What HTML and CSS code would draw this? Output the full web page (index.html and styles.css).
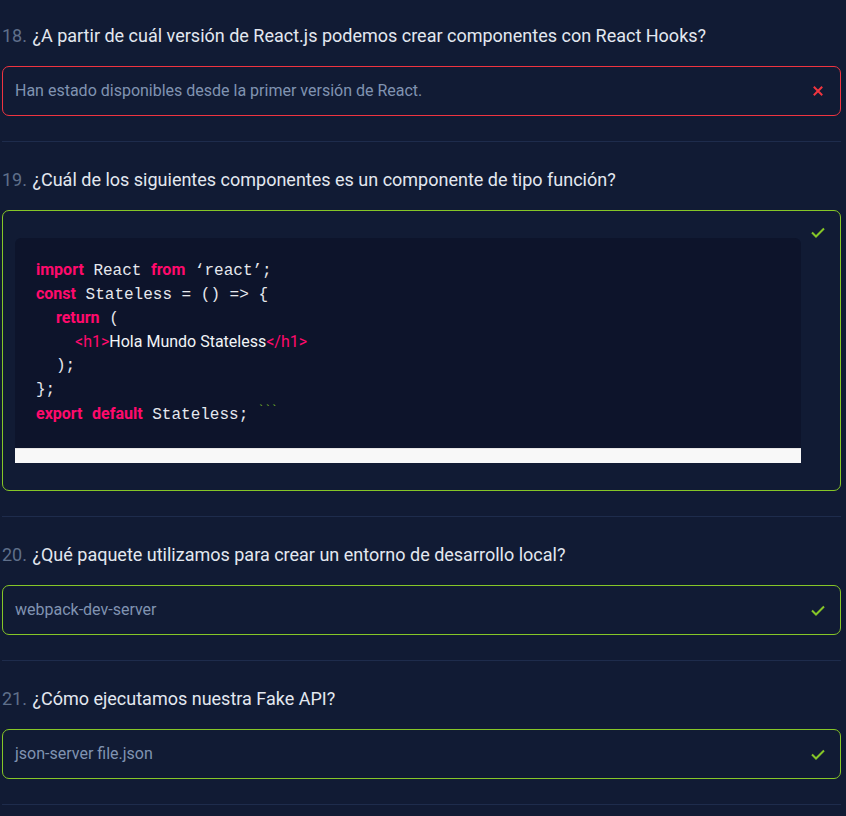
FILE: index.html
```html
<!DOCTYPE html>
<html lang="es">
<head>
<meta charset="utf-8">
<title>Quiz</title>
<link rel="stylesheet" href="styles.css">
</head>
<body>
<div class="quiz">
  <section class="item">
    <h2 class="question"><span class="num">18.</span> ¿A partir de cuál versión de React.js podemos crear componentes con React Hooks?</h2>
    <div class="answer wrong">
      <span class="answer-text">Han estado disponibles desde la primer versión de React.</span>
      <span class="icon">
        <svg width="10" height="10" viewBox="0 0 10 10"><path d="M1.5 1.5 L8.5 8.5 M8.5 1.5 L1.5 8.5" stroke="#f0353f" stroke-width="2" fill="none" stroke-linecap="square"/></svg>
      </span>
    </div>
  </section>

  <section class="item">
    <h2 class="question"><span class="num">19.</span> ¿Cuál de los siguientes componentes es un componente de tipo función?</h2>
    <div class="answer right code-answer">
      <div class="code-wrap">
        <div class="code">
          <div class="line"><span class="kw">import</span> React <span class="kw">from</span> ‘react’;</div>
          <div class="line"><span class="kw">const</span> Stateless = () =&gt; {</div>
          <div class="line ind1"><span class="kw">return</span> (</div>
          <div class="line ind2"><span class="tag">&lt;h1&gt;</span><span class="jsx">Hola Mundo Stateless</span><span class="tag">&lt;/h1&gt;</span></div>
          <div class="line ind1">);</div>
          <div class="line">};</div>
          <div class="line"><span class="kw">export</span> <span class="kw">default</span> Stateless; <span class="ticks">```</span></div>
        </div>
        <div class="scrollbar"></div>
      </div>
      <span class="icon icon-top">
        <svg width="14" height="11" viewBox="0 0 14 11"><path d="M1 5.5 L5 9.5 L13 1.5" stroke="#86c627" stroke-width="2" fill="none"/></svg>
      </span>
    </div>
  </section>

  <section class="item">
    <h2 class="question"><span class="num">20.</span> ¿Qué paquete utilizamos para crear un entorno de desarrollo local?</h2>
    <div class="answer right">
      <span class="answer-text">webpack-dev-server</span>
      <span class="icon">
        <svg width="14" height="11" viewBox="0 0 14 11"><path d="M1 5.5 L5 9.5 L13 1.5" stroke="#86c627" stroke-width="2" fill="none"/></svg>
      </span>
    </div>
  </section>

  <section class="item">
    <h2 class="question"><span class="num">21.</span> ¿Cómo ejecutamos nuestra Fake API?</h2>
    <div class="answer right">
      <span class="answer-text">json-server file.json</span>
      <span class="icon">
        <svg width="14" height="11" viewBox="0 0 14 11"><path d="M1 5.5 L5 9.5 L13 1.5" stroke="#86c627" stroke-width="2" fill="none"/></svg>
      </span>
    </div>
  </section>
</div>
</body>
</html>
```

FILE: styles.css
```css
html, body {
  margin: 0;
  padding: 0;
  background: #111b34;
}

body {
  font-family: Roboto, "Liberation Sans", sans-serif;
  color: #e2e8f0;
}

.quiz {
  width: 839px;
  margin-left: 2px;
}

.item {
  padding: 24px 0 25px;
  border-bottom: 1px solid #1e2c4c;
}

.item + .item {
  padding-top: 26px;
}

.question {
  margin: 0 0 18px;
  font-size: 18px;
  font-weight: 400;
  line-height: 24px;
  color: #e3e8f0;
}

.num {
  color: #5f6f8a;
  margin-right: 1px;
}

.answer {
  display: flex;
  align-items: center;
  border: 1px solid;
  border-radius: 7px;
  padding: 0 14px 0 12px;
  min-height: 48px;
}

.answer.wrong {
  border-color: #ef3440;
}

.answer.right {
  border-color: #86c627;
}

.answer-text {
  flex: 1;
  font-size: 16px;
  color: #8093b1;
  line-height: 48px;
}

.icon {
  display: flex;
  align-items: center;
  justify-content: center;
  width: 16px;
  height: 46px;
}

.code-answer {
  align-items: flex-start;
  padding-right: 14px;
}

.code-wrap {
  flex: 1;
  margin: 27px 0 27px;
}

.icon-top {
  margin-left: 9px;
  height: 42px;
}

.code {
  background: #0d142b;
  border-radius: 6px 6px 0 0;
  padding: 20px 21px 22px;
  font-family: "Liberation Mono", "DejaVu Sans Mono", monospace;
  font-size: 16px;
  line-height: 24px;
  color: #e6e8ee;
}

.line {
  height: 24px;
  white-space: pre;
}

.ind1 {
  padding-left: 20px;
}

.ind2 {
  padding-left: 39px;
}

.kw {
  font-family: Roboto, "Liberation Sans", sans-serif;
  font-weight: 700;
  color: #ff0a6c;
}

.tag {
  font-family: Roboto, "Liberation Sans", sans-serif;
  color: #ff0a6c;
}

.jsx {
  font-family: Roboto, "Liberation Sans", sans-serif;
  color: #f2f4f7;
}

.ticks {
  color: #86c627;
  font-size: 11px;
  line-height: 0;
  vertical-align: 6px;
}

.scrollbar {
  height: 14px;
  background: #f8f8f8;
  border-top: 1px solid #e6e6e6;
}
```
